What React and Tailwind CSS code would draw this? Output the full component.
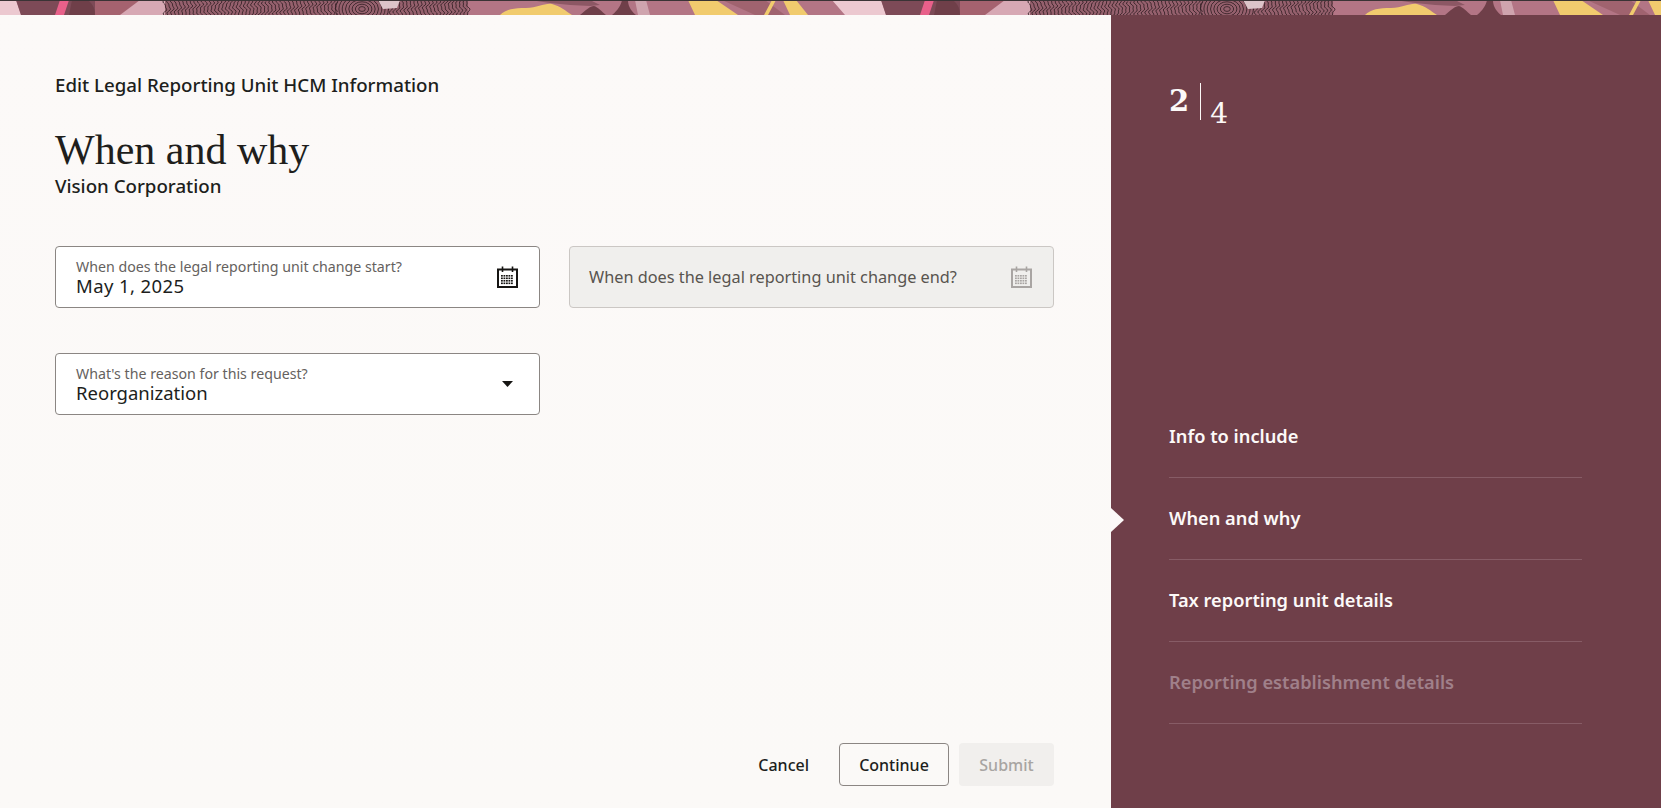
import React from 'react';

const SANS = "font-['Noto_Sans',sans-serif]";

// wavy lines for the wood grain part of the banner, they follow one flow so they don't cross
const grainLines = Array.from({ length: 84 }, (_, i) => {
  const x = 165 + i * 3.65;
  let d = '';
  for (let y = 0; y <= 16; y += 1) {
    const dx = Math.sin(x * 0.06 + y * 0.5) * 1.5 + Math.sin(x * 0.17 + y * 1.1) * 0.7;
    d += `${y === 0 ? 'M' : ' L'}${(x + dx).toFixed(1)} ${y}`;
  }
  return d;
});

const Banner = () => (
  <div className="h-[15px] shrink-0 border-t border-[#3a3335]">
    <svg width="100%" height="14" className="block">
      <defs>
        <pattern id="banner" x="0" y="-1" width="865" height="15" patternUnits="userSpaceOnUse">
          <rect width="865" height="15" fill="#b37585" />
          <path d="M0 0H16L21 15H0Z M832 0H865V15H845Z" fill="#ecc8d0" />
          <path d="M16 0H95C98 5 98 10 95 15H21Z" fill="#7d4a57" />
          <path d="M95 0H165V15H95Z" fill="#a5626f" />
          <path d="M60 0H69L64 15H55Z" fill="#e8608a" />
          <path d="M72 0H88C94 5 95 10 95 15H69Z" fill="#6f3f49" />
          <path d="M140 0H165V15H120Z" fill="#d7a8b4" />
          <rect x="165" width="303" height="15" fill="#95606d" />
          <g fill="none" stroke="#2d1a20" strokeWidth="0.8">
            {grainLines.map((d, i) => <path key={i} d={d} />)}
          </g>
          <rect x="338" y="0" width="50" height="15" fill="#95606d" />
          <g fill="none" stroke="#2d1a20" strokeWidth="0.8">
            {[3, 6, 9, 12, 15, 18, 21, 24].map(r => <ellipse key={r} cx="362" cy="9" rx={r * 1.1} ry={r * 0.8} />)}
          </g>
          <path d="M378 0H400L397 8L383 9Z" fill="#dcc4c9" />
          <path d="M500 15C506 9 514 8 526 8C538 8 544 3 552 4C560 6 566 11 572 15Z" fill="#f1cb6e" />
          <path d="M530 0H590L600 5L590 6L570 5L550 3Z" fill="#8c5764" />
          <path d="M580 15C586 10 590 6 594 6C598 7 602 12 606 15Z" fill="#6f3f49" />
          <path d="M622 0H628C628 5 630 10 636 15H612C618 10 621 5 622 0Z" fill="#6f3f49" />
          <path d="M635 0H646L650 15H638Z" fill="#cfa4ae" />
          <path d="M688 0H716L738 15H695Z" fill="#f1cb6e" />
          <path d="M722 0H765L785 15H755Z" fill="#a0636f" />
          <path d="M772 0H776L768 15H764Z" fill="#f1cb6e" />
          <path d="M783 0H796L808 15H790Z" fill="#f1cb6e" />
        </pattern>
      </defs>
      <rect width="100%" height="14" fill="url(#banner)" />
    </svg>
  </div>
);

const CalendarIcon = ({ color }) => (
  <svg width="21" height="22" viewBox="0 0 21 22" className="shrink-0">
    <rect x="1" y="3.5" width="19" height="17.5" fill="none" stroke={color} strokeWidth="2" />
    <path d="M5.5 0.5V6 M15.5 0.5V6" stroke={color} strokeWidth="1.6" />
    <g fill={color}>
      {[9, 11.5, 14, 16.5].map(y =>
        [4, 6.5, 9, 11.5, 14].map(x => <rect key={`${x}-${y}`} x={x} y={y} width="1.8" height="1.6" />)
      )}
    </g>
  </svg>
);

const CaretIcon = () => (
  <svg width="11" height="6" viewBox="0 0 11 6" className="shrink-0">
    <path d="M0 0H11L5.5 6Z" fill="#161513" />
  </svg>
);

const Field = ({ label, value, valueClass, icon }) => (
  <div className="flex h-[62px] w-[485px] items-center justify-between rounded border border-[#8b8683] bg-white pl-[20px] pr-[21px]">
    <div>
      <div className="text-[14.2px] leading-[17px] text-[#65615e]">{label}</div>
      <div className={`text-[18.5px] leading-[22px] text-[#201e1c] ${valueClass || ''}`}>{value}</div>
    </div>
    {icon}
  </div>
);

const steps = [
  { label: 'Info to include' },
  { label: 'When and why', current: true },
  { label: 'Tax reporting unit details' },
  { label: 'Reporting establishment details', disabled: true },
];

export default function App() {
  return (
    <div className={`flex h-screen flex-col overflow-hidden bg-linear-to-b from-[#fcf9f8] to-[#fbf9f7] ${SANS}`}>
      <Banner />
      <div className="flex min-h-0 flex-1">
        {/* Form side */}
        <div className="flex w-[1111px] shrink-0 flex-col pl-[55px] pr-[57px] pt-[57px]">
          <div className="text-[18.7px] font-medium leading-[26px] text-[#201e1c]">
            Edit Legal Reporting Unit HCM Information
          </div>
          <h1 className="mt-[27px] font-['Liberation_Serif',serif] text-[42px] font-normal leading-[50px] text-[#201e1c]">
            When and why
          </h1>
          <div className="-mt-[2px] text-[18.7px] font-medium leading-[26px] text-[#201e1c]">Vision Corporation</div>

          <div className="mt-[47px] flex justify-between">
            <Field
              label="When does the legal reporting unit change start?"
              value="May 1, 2025"
              valueClass="tracking-[0.4px]"
              icon={<CalendarIcon color="#161513" />}
            />
            <div className="flex h-[62px] w-[485px] items-center justify-between rounded border border-[#cbc7c4] bg-[#f0efed] pl-[19px] pr-[21px]">
              <span className="text-[16.3px] text-[#58544f]">When does the legal reporting unit change end?</span>
              <CalendarIcon color="#a9a5a3" />
            </div>
          </div>

          <div className="mt-[45px]">
            <Field
              label="What's the reason for this request?"
              value="Reorganization"
              icon={<span className="mr-[5px] flex"><CaretIcon /></span>}
            />
          </div>

          <div className="mt-auto flex items-center justify-end pb-[22px]">
            <button className="mr-[30px] text-[16px] font-medium text-[#201e1c]">Cancel</button>
            <button className="h-[43px] w-[110px] rounded border border-[#8b8683] text-[16px] font-medium text-[#201e1c]">
              Continue
            </button>
            <button className="ml-[10px] h-[43px] w-[95px] rounded bg-[#f1efed] text-[16px] font-medium text-[#a8a5a2]">
              Submit
            </button>
          </div>
        </div>

        {/* Steps side */}
        <div className="relative flex flex-1 flex-col bg-[#6f3f49] pl-[58px] pr-[79px] pb-[84px] pt-[68px] text-white">
          <div className="flex items-start font-['DejaVu_Serif',serif] text-[#fcf9f8]">
            <span className="mt-[1px] text-[29px] font-semibold leading-[34px]">2</span>
            <span className="ml-[11px] h-[37px] w-px bg-[#fcf9f8]" />
            <span className="ml-[9px] mt-[12px] text-[28px] font-medium leading-[38px]">4</span>
          </div>
          <div className="mt-auto">
            {steps.map(step => (
              <div
                key={step.label}
                className={`relative flex h-[82px] items-center border-b border-[#875c66] pb-[2px] text-[18.25px] font-semibold ${
                  step.disabled ? 'text-[#a0808a]' : 'text-[#fcf9f8]'
                }`}
              >
                {step.current && (
                  <svg width="13" height="24" viewBox="0 0 13 24" className="absolute -left-[58px] top-[30px]">
                    <path d="M0 0L13 12L0 24Z" fill="#fcf9f8" />
                  </svg>
                )}
                {step.label}
              </div>
            ))}
          </div>
        </div>
      </div>
    </div>
  );
}
